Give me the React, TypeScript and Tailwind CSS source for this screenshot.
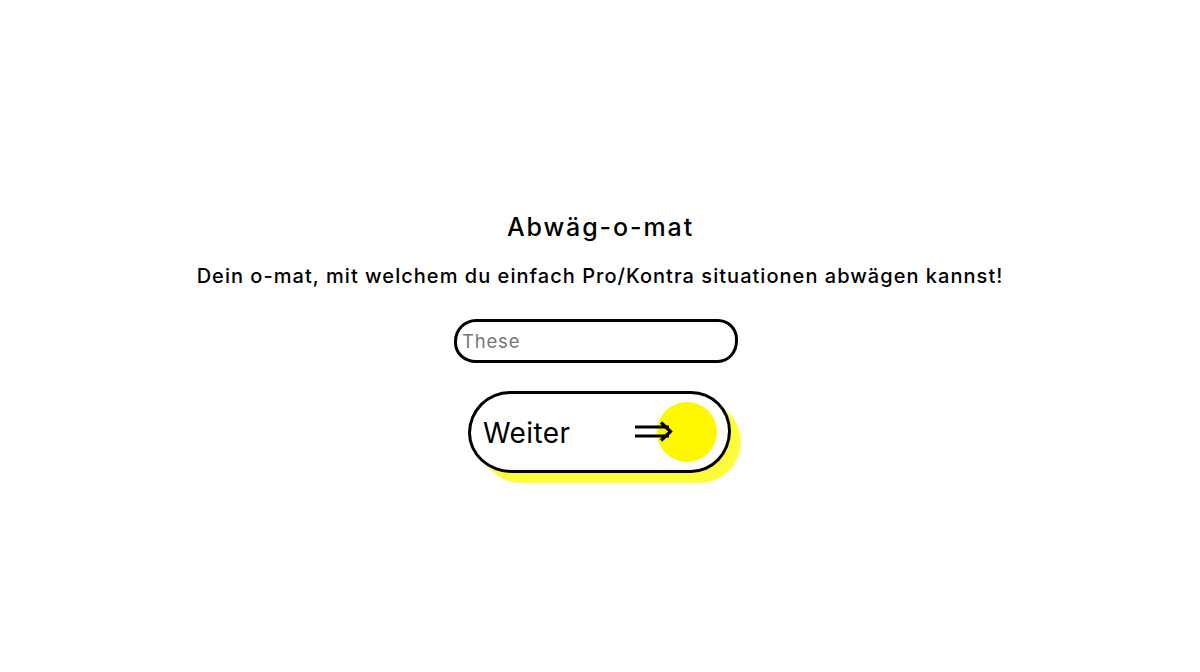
import React from "react";

const ff = { fontFamily: 'Inter, "Open Sans", sans-serif' };

export default function App() {
  return (
    <div className="w-[1200px] h-[672px] bg-white flex flex-col items-center pt-[211px] text-black" style={ff}>
      <h1 className="text-[25px] leading-[32px] font-medium tracking-[1.9px] ml-[1px]">Abwäg-o-mat</h1>
      <p className="mt-[20px] text-[20px] leading-[26px] font-medium tracking-[1.03px]">
        Dein o-mat, mit welchem du einfach Pro/Kontra situationen abwägen kannst!
      </p>
      <div className="mt-[30px] mr-[8px] w-[284px] h-[44px] border-[3px] border-black rounded-[22px_20px_20px_22px/22px_20px_22px_20px] flex items-center pl-[5px] pt-[2px]">
        <input
          placeholder="These"
          className="w-full bg-transparent outline-none text-[18.5px] tracking-[0.8px] text-black placeholder:text-[#767676]"
          style={ff}
        />
      </div>
      <div className="mt-[28px] mr-[1px] relative w-[263px] h-[82px]">
        <div className="absolute left-[12px] top-[10px] w-[261px] h-[82px] rounded-[41px] bg-[#fffb3d]" />
        <button className="relative w-[263px] h-[82px] bg-white border-[3px] border-black rounded-[42px_40px_40px_44px/42px_40px_42px_40px] flex items-center justify-between pl-[12px] pr-[11px]">
          <span className="text-[28px] leading-none tracking-[0.4px] pt-[1px]" style={ff}>Weiter</span>
          <span className="flex items-center">
            <svg width="38" height="22" viewBox="0 0 38 22" className="relative z-10 -mr-[16px]" fill="none">
              <path d="M0 6 H34 M0 15 H34" stroke="black" strokeWidth="3.2" />
              <path d="M26 1.5 L35.5 10.5 L26 19.5" stroke="black" strokeWidth="3.2" strokeLinejoin="miter" />
            </svg>
            <span className="block w-[60px] h-[60px] rounded-full bg-[#fff700]" />
          </span>
        </button>
      </div>
    </div>
  );
}
